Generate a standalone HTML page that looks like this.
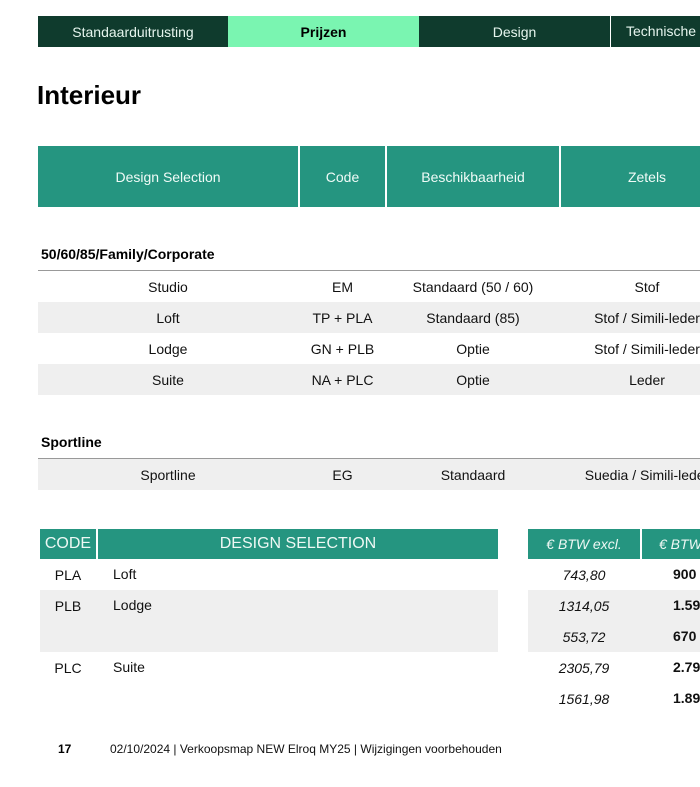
<!DOCTYPE html><html><head><style>
body{margin:0;width:700px;height:787px;background:#fff;position:relative;overflow:hidden;font-family:"Liberation Sans",sans-serif;}
.a{position:absolute;box-sizing:border-box;}
.c{display:flex;align-items:center;justify-content:center;}
.tab{top:16px;height:31px;color:#e6f5ee;font-size:14px;background:#0f3b2d;}
.th{top:146px;height:61px;background:#259580;color:#eef;font-size:14px;color:#f0fbf7;}
.r{font-size:14px;color:#111;height:31px;}
.g{background:#efefef;}
</style></head><body>
<div class="a c tab" style="left:38px;width:190px">Standaarduitrusting</div>
<div class="a c tab" style="left:228px;width:191px;background:#7af5b1;color:#000;font-weight:bold">Prijzen</div>
<div class="a c tab" style="left:419px;width:191px">Design</div>
<div class="a tab" style="left:611px;width:95px;padding-left:15px;line-height:31px">Technische</div>
<div class="a" style="left:37px;top:80px;font-size:26px;font-weight:bold;color:#000">Interieur</div>
<div class="a c th" style="left:38px;width:260px">Design Selection</div>
<div class="a c th" style="left:300px;width:85px">Code</div>
<div class="a c th" style="left:387px;width:172px">Beschikbaarheid</div>
<div class="a c th" style="left:561px;width:172px">Zetels</div>
<div class="a" style="left:41px;top:246px;font-size:14px;font-weight:bold">50/60/85/Family/Corporate</div>
<div class="a" style="left:38px;top:270px;width:662px;height:1px;background:#999"></div>
<div id="rows"></div>
<div class="a" style="left:41px;top:434px;font-size:14px;font-weight:bold">Sportline</div>
<div class="a" style="left:38px;top:458px;width:662px;height:1px;background:#999"></div>
<script>
function row(y,g,v){var cx=[[38,260],[300,85],[387,172],[561,172]];var h='<div class="a'+(g?' g':'')+'" style="left:38px;top:'+y+'px;width:662px;height:31px"></div>';
for(var i=0;i<4;i++)h+='<div class="a c r" style="top:'+y+'px;left:'+cx[i][0]+'px;width:'+cx[i][1]+'px">'+v[i]+'</div>';document.write(h);}
row(271,0,['Studio','EM','Standaard (50 / 60)','Stof']);
row(302,1,['Loft','TP + PLA','Standaard (85)','Stof / Simili-leder']);
row(333,0,['Lodge','GN + PLB','Optie','Stof / Simili-leder']);
row(364,1,['Suite','NA + PLC','Optie','Leder']);
row(459,1,['Sportline','EG','Standaard','Suedia / Simili-leder']);
</script>
<div class="a c" style="left:40px;top:529px;width:56px;height:30px;background:#259580;color:#eef8f4;font-size:16px">CODE</div>
<div class="a c" style="left:98px;top:529px;width:400px;height:30px;background:#259580;color:#eef8f4;font-size:16px">DESIGN SELECTION</div>
<div class="a c" style="left:528px;top:529px;width:112px;height:30px;background:#259580;color:#eef8f4;font-size:14px;font-style:italic">€ BTW excl.</div>
<div class="a" style="left:642px;top:529px;width:60px;height:30px;background:#259580;color:#eef8f4;font-size:14px;font-style:italic;line-height:30px;padding-left:17px">€ BTW</div>
<div class="a g" style="left:40px;top:590px;width:458px;height:62px"></div>
<div class="a g" style="left:528px;top:590px;width:172px;height:62px"></div>
<script>
var L=[[559,'PLA','Loft','743,80','900'],[590,'PLB','Lodge','1314,05','1.590'],[621,'','','553,72','670'],[652,'PLC','Suite','2305,79','2.790'],[683,'','','1561,98','1.890']];
L.forEach(function(r){var y=r[0];document.write('<div class="a c r" style="top:'+y+'px;left:40px;width:56px">'+r[1]+'</div><div class="a r" style="top:'+y+'px;left:113px;line-height:31px">'+r[2]+'</div><div class="a c r" style="top:'+y+'px;left:528px;width:112px;font-style:italic">'+r[3]+'</div><div class="a r" style="top:'+y+'px;left:673px;line-height:31px;font-weight:bold">'+r[4]+'</div>');});
</script>
<div class="a" style="left:58px;top:742px;font-size:12px;font-weight:bold">17</div>
<div class="a" style="left:110px;top:742px;font-size:12px;color:#111">02/10/2024 | Verkoopsmap NEW Elroq MY25 | Wijzigingen voorbehouden</div>
</body></html>
